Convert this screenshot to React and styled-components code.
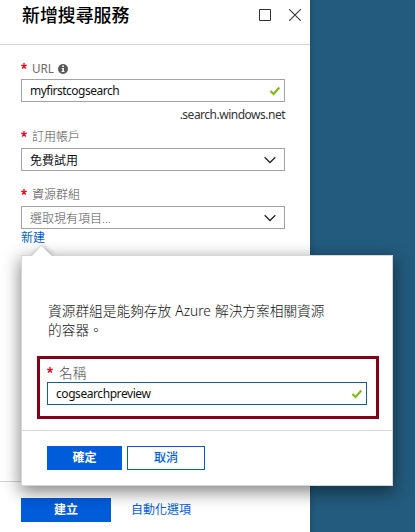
import React from "react";
import styled, { createGlobalStyle } from "styled-components";

const GlobalStyle = createGlobalStyle`
  * { box-sizing: border-box; }
  body {
    margin: 0;
    background: #235b7e;
    font-family: "Noto Sans", "Noto Sans CJK TC", sans-serif;
    font-size: 12px;
    color: #1c1c1c;
  }
`;

const Page = styled.div`
  position: relative;
  width: 415px;
  height: 532px;
  overflow: hidden;
  background: linear-gradient(to right, #1e5274 310px, #235b7e 316px);
`;

const Blade = styled.main`
  display: flex;
  flex-direction: column;
  width: 310px;
  height: 532px;
  background: #fff;
`;

const Header = styled.header`
  display: flex;
  justify-content: space-between;
  height: 45px;
  padding: 0 9px 0 22px;
  border-bottom: 1px solid #d4d4d4;
`;

const Title = styled.h1`
  margin: 0;
  font-size: 17.9px;
  font-weight: 500;
  line-height: 30px;
  color: #000;
`;

const WindowIcons = styled.div`
  display: flex;
  gap: 18px;
  padding-top: 9px;
`;

const Form = styled.div`
  display: flex;
  flex-direction: column;
  height: 436px;
  padding: 14px 25px 0 21px;
`;

const Label = styled.label`
  display: flex;
  align-items: center;
  height: ${(p) => p.$height || 20}px;
  padding-top: ${(p) => p.$top || 0}px;
  padding-bottom: ${(p) => p.$bottom || 0}px;
  font-size: ${(p) => p.$size || 12}px;
  font-weight: ${(p) => p.$weight || 300};
  color: ${(p) => (p.$weight ? "#6a6a6a" : "#4c4c4c")};
  white-space: nowrap;
`;

const Star = styled.svg`
  width: 6px;
  height: 6px;
  margin-right: ${(p) => p.$gap || 5}px;
  margin-bottom: 5px;
`;

const Field = styled.div`
  display: flex;
  flex: none;
  align-items: center;
  justify-content: space-between;
  height: 23px;
  padding: 0 ${(p) => p.$right || 3}px 0 8px;
  border: 1px solid ${(p) => (p.$focused ? "#0f5ea8" : "#a3a3a3")};
  background: #fff;
  color: ${(p) => (p.$muted ? "#555" : "#111")};
  font-weight: ${(p) => (p.$muted ? 300 : 400)};
  letter-spacing: ${(p) => p.$track || 0}px;
  white-space: nowrap;
`;

const Suffix = styled.div`
  height: 24px;
  line-height: 26px;
  text-align: right;
  letter-spacing: -0.5px;
  color: #333;
`;

const TextLink = styled.a`
  color: #015cda;
  line-height: ${(p) => p.$line || 18}px;
  text-decoration: none;
`;

const Footer = styled.footer`
  display: flex;
  align-items: flex-start;
  gap: 20px;
  height: 51px;
  padding: 16px 0 0 21px;
  border-top: 1px solid #d4d4d4;
`;

const Button = styled.button`
  width: ${(p) => p.$width}px;
  height: 24px;
  padding: 0 0 1px;
  border: 1px solid #015cda;
  border-radius: 0;
  background: ${(p) => (p.$outline ? "#fff" : "#015cda")};
  color: ${(p) => (p.$outline ? "#015cda" : "#fff")};
  font-family: inherit;
  font-size: 12px;
  font-weight: ${(p) => (p.$outline ? 500 : 700)};
  line-height: 20px;
`;

const Popover = styled.section`
  position: absolute;
  left: 21px;
  top: 255px;
  width: 372px;
  height: 231px;
  display: flex;
  flex-direction: column;
  border: 1px solid #d3d7d8;
  background: #fff;
  box-shadow: 0 5px 16px 1px rgba(0, 0, 0, 0.48);
`;

const Pointer = styled.svg`
  position: absolute;
  left: 8px;
  top: -11px;
  width: 24px;
  height: 12px;
  filter: drop-shadow(1px -1px 2px rgba(0, 0, 0, 0.25));
  clip-path: inset(-6px -6px 1px -6px);
`;

const Description = styled.p`
  height: 100px;
  margin: 0;
  padding: 45px 0 0 26px;
  font-size: 13.7px;
  font-weight: 300;
  line-height: 19px;
  word-spacing: 0.6px;
  color: #111;
  white-space: nowrap;
`;

const Highlight = styled.div`
  width: 342px;
  height: 63px;
  margin-left: 15px;
  padding: 3px 9px 0 7px;
  border: 3px solid #850019;
`;

const Actions = styled.div`
  display: flex;
  gap: 5px;
  margin-top: 11px;
  padding: 15px 0 0 25px;
  border-top: 1px solid #d3d7d8;
`;

const InfoIcon = styled.svg`
  width: 10px;
  height: 10px;
  margin: 2px 0 0 4px;
`;

const Required = ({ gap }) => (
  <Star viewBox="0 0 6 6" $gap={gap}>
    <path d="M3 0v3M.2 2.200l2.800.8 2.800-.8M1.200 5.600L3 3l1.800 2.600" stroke="#e81123" strokeWidth="1.4" fill="none" />
  </Star>
);

const Check = () => (
  <svg width="12" height="10" viewBox="0 0 12 10">
    <path d="M1.400 5l3.200 3 5.700-6.500" stroke="#7fba10" strokeWidth="2.100" fill="none" />
  </svg>
);

const Chevron = () => (
  <svg width="12" height="8" viewBox="0 0 12 8">
    <path d="M.7 1.300L6 6.500l5.300-5.200" stroke="#222" strokeWidth="1.3" fill="none" />
  </svg>
);

export default function App() {
  return (
    <Page>
      <GlobalStyle />
      <Blade>
        <Header>
          <Title>新增搜尋服務</Title>
          <WindowIcons>
            <svg width="12" height="12" viewBox="0 0 12 12">
              <path d="M.5.5h11v11H.5z" stroke="#333" fill="none" />
            </svg>
            <svg width="12" height="12" viewBox="0 0 12 12">
              <path d="M.2.2l11.600 11.600M11.800.2L.2 11.800" stroke="#333" strokeWidth="1.05" fill="none" />
            </svg>
          </WindowIcons>
        </Header>
        <Form>
          <Label $bottom={2} $size={11.7} $weight={400}>
            <Required />
            URL
            <InfoIcon viewBox="0 0 10 10">
              <circle cx="5" cy="5" r="5" fill="#595959" />
              <path d="M4.200 1.500h1.700v1.400H4.200zM3.600 4h2.300v3.200h.7V8H3.500v-.8h.8V4.800h-.7z" fill="#fff" />
            </InfoIcon>
          </Label>
          <Field $track={-0.5}>
            myfirstcogsearch
            <Check />
          </Field>
          <Suffix>.search.windows.net</Suffix>
          <Label $height={22} $bottom={2}>
            <Required />
            訂用帳戶
          </Label>
          <Field $right={8}>
            免費試用
            <Chevron />
          </Field>
          <Label $height={35} $top={11}>
            <Required />
            資源群組
          </Label>
          <Field $right={8} $muted>
            選取現有項目...
            <Chevron />
          </Field>
          <TextLink>新建</TextLink>
        </Form>
        <Footer>
          <Button $width={90}>建立</Button>
          <TextLink $line={24}>自動化選項</TextLink>
        </Footer>
      </Blade>
      <Popover>
        <Pointer viewBox="0 0 24 12">
          <path d="M1 12L11.500 1 23 12z" fill="#fff" />
        </Pointer>
        <Description>
          資源群組是能夠存放 Azure 解決方案相關資源
          <br />
          的容器。
        </Description>
        <Highlight>
          <Label $size={13.7}>
            <Required gap={6} />
            名稱
          </Label>
          <Field $focused $track={-0.43}>
            cogsearchpreview
            <Check />
          </Field>
        </Highlight>
        <Actions>
          <Button $width={75}>確定</Button>
          <Button $width={78} $outline>取消</Button>
        </Actions>
      </Popover>
    </Page>
  );
}
